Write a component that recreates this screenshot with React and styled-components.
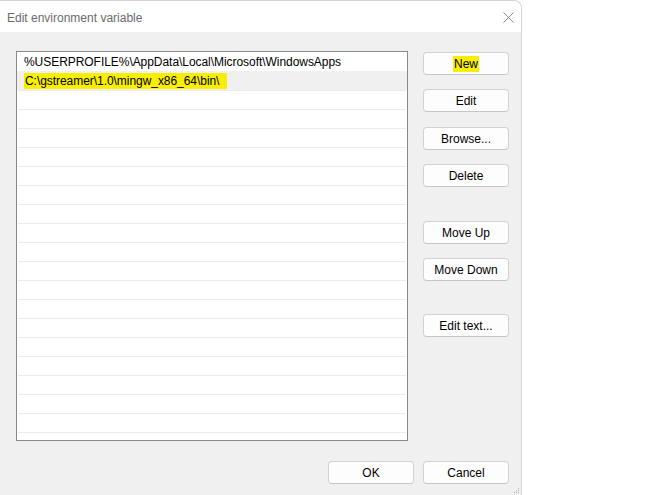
import React from 'react';
import styled, { createGlobalStyle } from 'styled-components';

const GlobalStyle = createGlobalStyle`
  html, body {
    margin: 0;
    padding: 0;
    background: #ffffff;
  }
  body {
    font-family: "Liberation Sans", Arial, sans-serif;
    font-size: 12px;
    color: #000;
  }
`;

const paths = [
  '%USERPROFILE%\\AppData\\Local\\Microsoft\\WindowsApps',
  'C:\\gstreamer\\1.0\\mingw_x86_64\\bin\\',
];

const sideButtons = [
  { label: 'New', space: 0, marked: true },
  { label: 'Edit', space: 14 },
  { label: 'Browse...', space: 15 },
  { label: 'Delete', space: 14 },
  { label: 'Move Up', space: 34 },
  { label: 'Move Down', space: 14 },
  { label: 'Edit text...', space: 33 },
];

const ROW_COUNT = 21;

const App = () => {
  const rows = Array.from({ length: ROW_COUNT }, (_, i) => paths[i] || '');
  return (
    <>
      <GlobalStyle />
      <Dialog>
        <TitleBar>
          <Title>Edit environment variable</Title>
          <CloseButton aria-label="Close">
            <svg width="11" height="11" viewBox="0 0 11 11">
              <path d="M0.5 0.5 L10.5 10.5 M10.5 0.5 L0.5 10.5" stroke="#8c8c8c" strokeWidth="1" fill="none" />
            </svg>
          </CloseButton>
        </TitleBar>
        <Body>
          <Main>
            <ListBox>
              {rows.map((text, i) => (
                <Row key={i} $first={i === 0} $selected={i === 1}>
                  {i === 1 ? <Marked $trail>{text}</Marked> : text}
                </Row>
              ))}
            </ListBox>
            <SideColumn>
              {sideButtons.map((b) => (
                <Button key={b.label} $space={b.space}>
                  {b.marked ? <Marked>{b.label}</Marked> : b.label}
                </Button>
              ))}
            </SideColumn>
          </Main>
          <Footer>
            <Button>OK</Button>
            <Button>Cancel</Button>
          </Footer>
        </Body>
        <Grip>
          <svg width="6" height="6" viewBox="0 0 6 6">
            <rect x="4" y="0" width="1" height="1" fill="#b5b5b5" />
            <rect x="2" y="2" width="1" height="1" fill="#b5b5b5" />
            <rect x="4" y="2" width="1" height="1" fill="#b5b5b5" />
            <rect x="0" y="4" width="1" height="1" fill="#b5b5b5" />
            <rect x="2" y="4" width="1" height="1" fill="#b5b5b5" />
            <rect x="4" y="4" width="1" height="1" fill="#b5b5b5" />
          </svg>
        </Grip>
      </Dialog>
    </>
  );
};

const Dialog = styled.div`
  position: relative;
  width: 521px;
  height: 494px;
  border-top: 1px solid #d4d4d4;
  border-right: 1px solid #d4d4d4;
  border-top-right-radius: 8px;
  background: #f0f0f0;
  overflow: hidden;
  display: flex;
  flex-direction: column;
`;

const TitleBar = styled.div`
  height: 31px;
  flex-shrink: 0;
  background: #ffffff;
  display: flex;
  align-items: center;
  justify-content: space-between;
  padding: 0 1px 0 7px;
`;

const Title = styled.span`
  color: #6b6b6b;
  font-size: 12px;
  padding-top: 2px;
`;

const CloseButton = styled.span`
  width: 24px;
  display: flex;
  justify-content: center;
  padding-top: 1px;
`;

const Body = styled.div`
  padding: 19px 12px 0 16px;
  display: flex;
  flex-direction: column;
`;

const Main = styled.div`
  display: grid;
  grid-template-columns: 392px 86px;
  column-gap: 15px;
`;

const ListBox = styled.div`
  height: 390px;
  box-sizing: border-box;
  border: 1px solid #868990;
  background: #ffffff;
  overflow: hidden;
`;

const Row = styled.div`
  height: 19px;
  box-sizing: border-box;
  margin: 0 1px;
  padding: 0 0 0 6px;
  display: flex;
  align-items: center;
  white-space: nowrap;
  letter-spacing: -0.05px;
  border-top: ${(p) => (p.$first ? 'none' : '1px solid #ebebeb')};
  background: ${(p) => (p.$selected ? '#f0f0f0' : 'transparent')};
  ${(p) => p.$selected && 'margin: 0; padding-left: 7px; border-top-color: #f0f0f0;'}
`;

const Marked = styled.span`
  background: #f7ee00;
  padding: 1px ${(p) => (p.$trail ? '8px' : '1px')} 1px 1px;
`;

const SideColumn = styled.div`
  display: flex;
  flex-direction: column;
  padding-top: 1px;
`;

const Button = styled.button`
  width: 86px;
  height: 23px;
  margin-top: ${(p) => (p.$space || 0)}px;
  box-sizing: border-box;
  padding: 0;
  border: 1px solid #d2d2d2;
  border-bottom-color: #c6c6c6;
  border-radius: 4px;
  background: #fdfdfd;
  font-family: inherit;
  font-size: 12px;
  color: #000;
  display: flex;
  align-items: center;
  justify-content: center;
`;

const Footer = styled.div`
  display: flex;
  justify-content: flex-end;
  gap: 9px;
  margin-top: 20px;
`;

const Grip = styled.div`
  position: absolute;
  right: 1px;
  bottom: 1px;
  line-height: 0;
`;

export default App;
